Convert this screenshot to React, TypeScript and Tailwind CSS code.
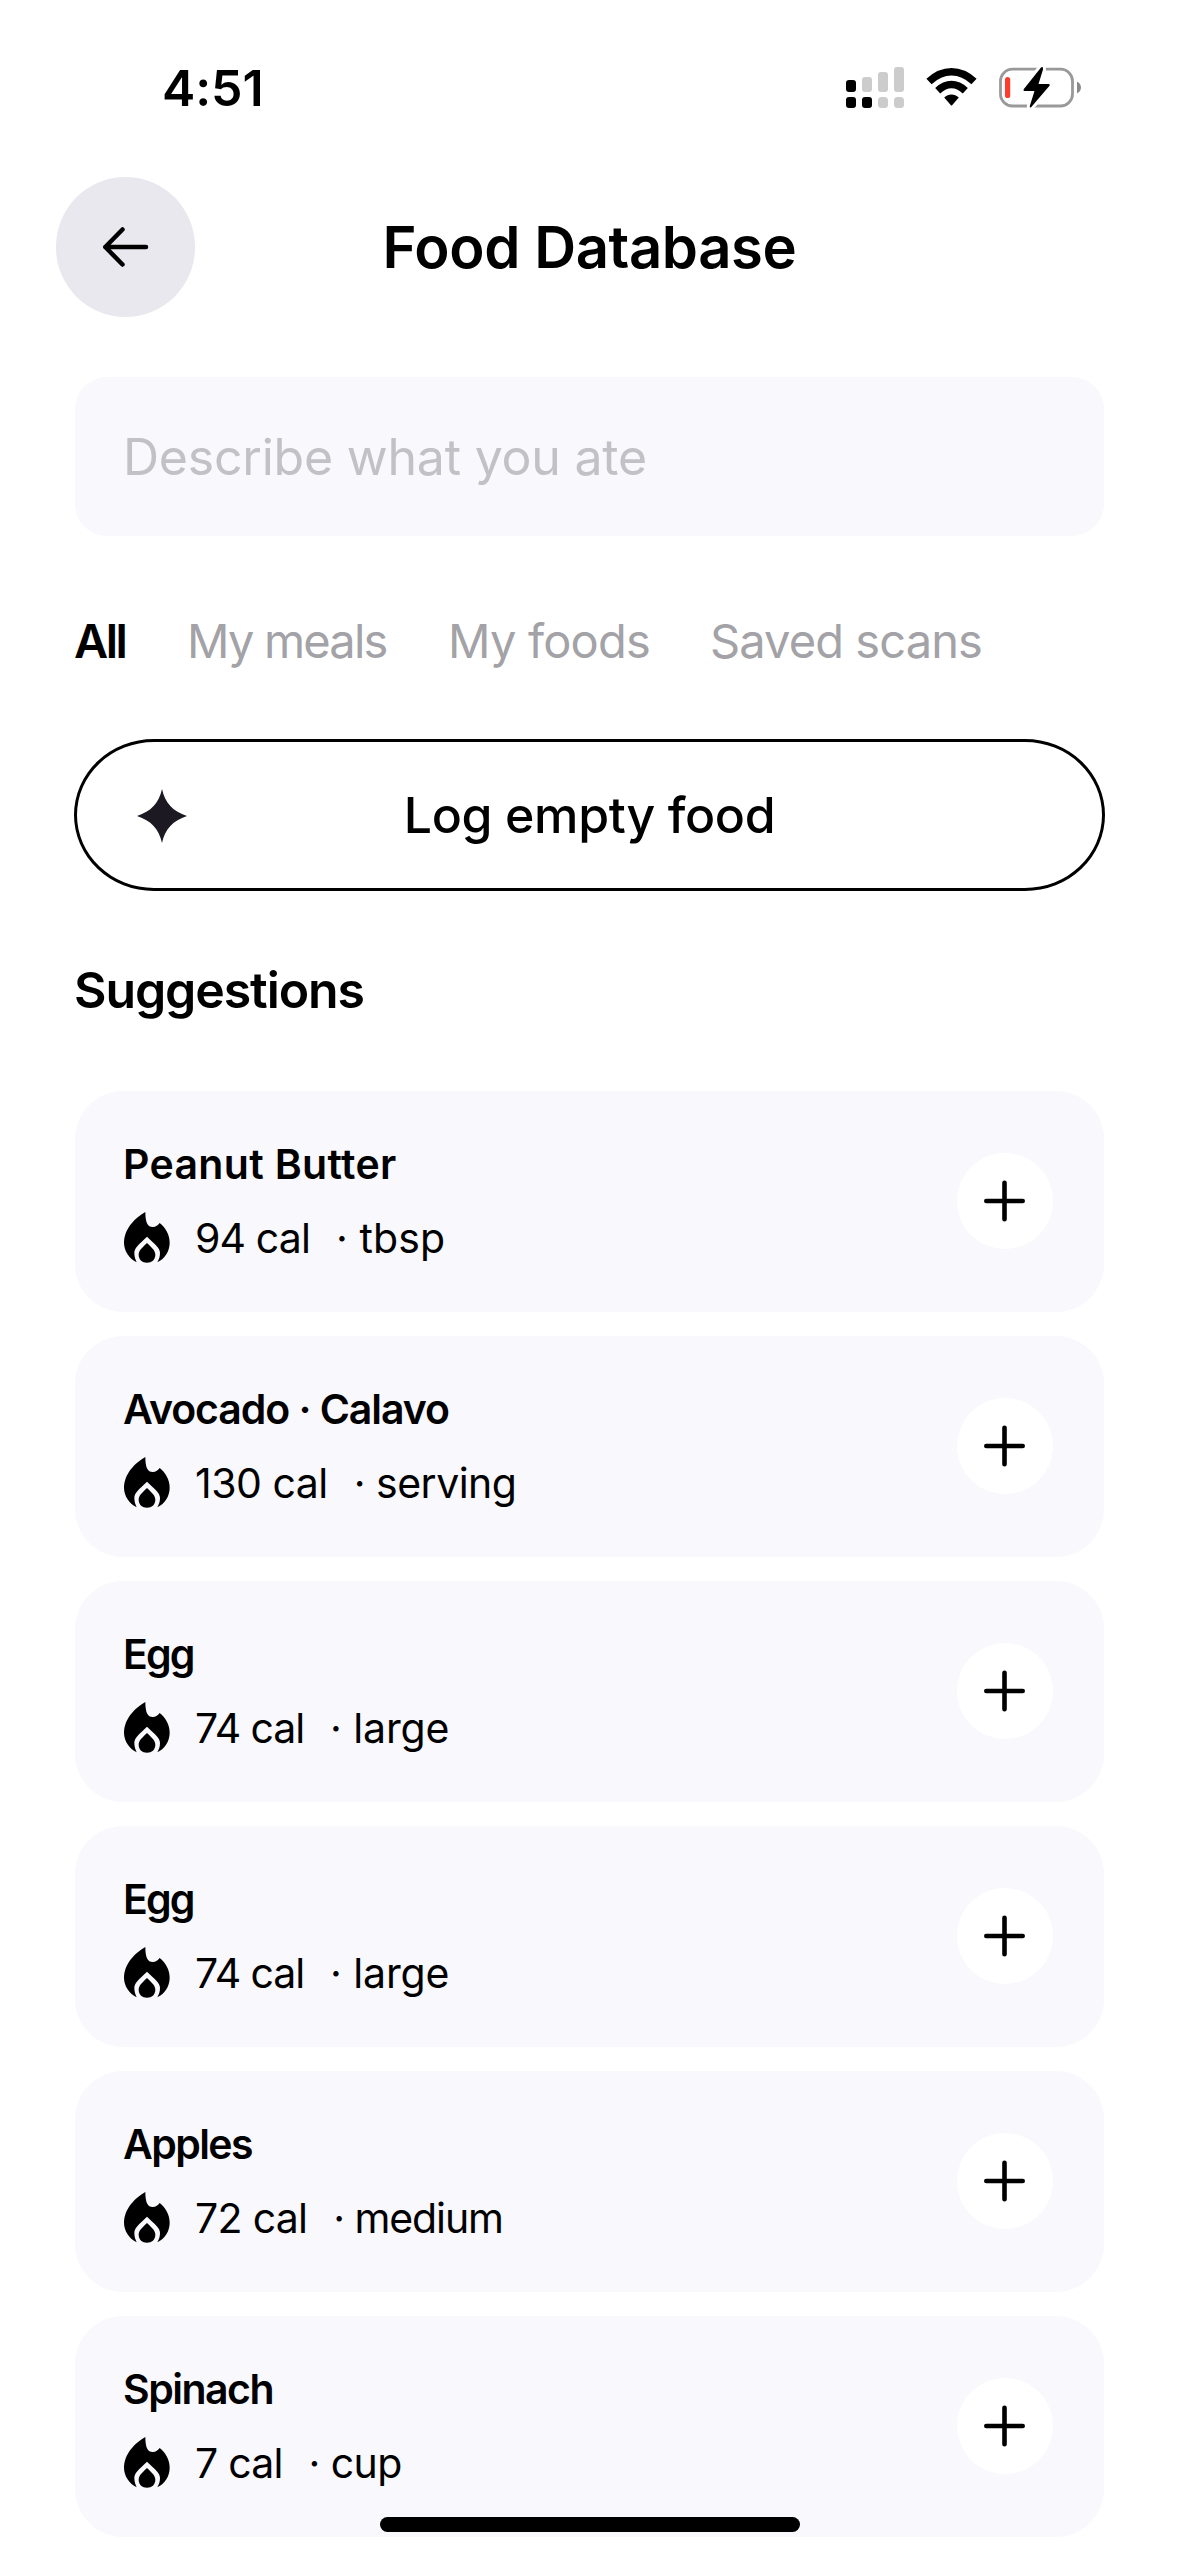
type Food = {
  name: string;
  nameClass: string;
  calories: string;
  caloriesClass: string;
  unit: string;
  unitClass: string;
};

const foods: Food[] = [
  { name: "Peanut Butter", nameClass: "tracking-[0.34px]", calories: "94 cal", caloriesClass: "tracking-[-0.86px]", unit: "tbsp", unitClass: "tracking-[0.1px]" },
  { name: "Avocado · Calavo", nameClass: "tracking-[-1.07px]", calories: "130 cal", caloriesClass: "tracking-[-0.5px]", unit: "serving", unitClass: "tracking-[-0.5px]" },
  { name: "Egg", nameClass: "tracking-[-1.8px]", calories: "74 cal", caloriesClass: "tracking-[-1.1px]", unit: "large", unitClass: "tracking-[-0.1px]" },
  { name: "Egg", nameClass: "tracking-[-1.8px]", calories: "74 cal", caloriesClass: "tracking-[-1.1px]", unit: "large", unitClass: "tracking-[-0.1px]" },
  { name: "Apples", nameClass: "tracking-[-1.6px]", calories: "72 cal", caloriesClass: "tracking-[-0.7px]", unit: "medium", unitClass: "tracking-[-1.1px]" },
  { name: "Spinach", nameClass: "tracking-[-1.5px]", calories: "7 cal", caloriesClass: "tracking-[-0.8px]", unit: "cup", unitClass: "tracking-[-0.6px]" },
];

function StatusIcons() {
  return (
    <svg width="250" height="56" viewBox="840 60 250 56" fill="none" aria-hidden="true">
      <g fill="#cccccc">
        <rect x="862" y="77" width="10" height="15" rx="3" />
        <rect x="878" y="72" width="10" height="20" rx="3" />
        <rect x="894" y="67" width="10" height="25" rx="3" />
        <rect x="878" y="97" width="10" height="11" rx="3.5" />
        <rect x="894" y="97" width="10" height="11" rx="3.5" />
      </g>
      <g fill="#000">
        <rect x="846" y="80" width="10" height="12" rx="3" />
        <rect x="846" y="97" width="10" height="11" rx="3" />
        <rect x="862" y="97" width="10" height="11" rx="3" />
      </g>
      <path d="M929 81.5C943 68.5 960 68.5 974 81.5" stroke="#000" strokeWidth="7.6" />
      <path d="M937.7 90.7C946.5 82.5 956.5 82.5 965.3 90.7" stroke="#000" strokeWidth="7.4" />
      <path d="M944.2 97.6C948.5 93.3 954.5 93.3 958.8 97.6L952.3 105Q951.5 106 950.7 105Z" fill="#000" />
      <rect x="1000.5" y="69.2" width="72" height="36.8" rx="12" stroke="#999" strokeWidth="2.8" />
      <path d="M1077 81.5C1082.3 84 1082.3 91 1077 93.5Z" fill="#8a8a8a" />
      <rect x="1005" y="77" width="5.2" height="21" rx="2.6" fill="#ff3b30" />
      <path
        d="M1041 67.5L1023.7 89.2Q1022.8 91 1024.5 91H1034.5L1029.8 106Q1029.6 108.5 1031.3 107L1049.3 86Q1050.6 84 1048.5 84H1038.5L1043 69.5Q1043.3 66 1041 67.5Z"
        fill="#000"
        stroke="#fff"
        strokeWidth="6"
        paintOrder="stroke"
        strokeLinejoin="round"
      />
    </svg>
  );
}

function FlameIcon() {
  return (
    <svg width="46" height="51" viewBox="72 38 138 153" fill="#000" aria-hidden="true">
      <path d="M136 38C104 56 72 90 72 130C72 155 88 178 110 189C106 180 103 172 103 161C103 146 116 136 141 112C166 136 180 146 180 161C180 172 177 180 172 189C195 178 209 155 209 130C209 105 196 85 179 71C174 78 168 83 158 83C143 83 136 70 136 38Z" />
      <path d="M141 131C125 147 116 154 116 166C116 181 127 190 141 190C155 190 166 181 166 166C166 154 157 147 141 131Z" />
    </svg>
  );
}

function FoodCard({ food }: { food: Food }) {
  return (
    <li className="flex h-[221px] items-center justify-between rounded-[48px] bg-[#f8f8fd] pl-[49px] pr-[51px]">
      <div className="flex flex-col pb-px text-[41px] leading-[50px]">
        <h3 className={`-ml-px font-semibold whitespace-nowrap ${food.nameClass}`}>{food.name}</h3>
        <div className="mt-[23px] flex items-center whitespace-nowrap">
          <FlameIcon />
          <span className={`ml-[25px] ${food.caloriesClass}`}>{food.calories}</span>
          <span className={`ml-[26px] ${food.unitClass}`}>· {food.unit}</span>
        </div>
      </div>
      <button type="button" aria-label={`Add ${food.name}`} className="-mt-px flex size-24 items-center justify-center rounded-full bg-white">
        <svg width="42" height="42" viewBox="0 0 42 42" fill="none" stroke="#000" strokeWidth="4.6" strokeLinecap="round" aria-hidden="true">
          <path d="M20.5 2.8V39.2M2.3 21H38.7" />
        </svg>
      </button>
    </li>
  );
}

export default function App() {
  return (
    <div className="relative flex h-[2556px] w-[1179px] flex-col overflow-hidden bg-white font-['Inter',sans-serif] text-black">
      <div className="flex h-[176px] shrink-0 items-center justify-between pr-[89px] pl-[162px]">
        <span className="text-[50px] leading-none font-semibold tracking-[-0.1px]">4:51</span>
        <StatusIcons />
      </div>

      <header className="mt-px grid h-[140px] shrink-0 grid-cols-[140px_1fr_140px] items-center px-[56px]">
        <button type="button" aria-label="Back" className="flex h-[140px] w-[139px] items-center justify-center rounded-full bg-[#e9e8ef]">
          <svg width="46" height="40" viewBox="0 0 46 40" fill="none" stroke="#000" strokeWidth="4.5" strokeLinecap="round" strokeLinejoin="round" aria-hidden="true">
            <path d="M43 20H2.3M19.5 2.5L2.3 20L19.5 37.5" />
          </svg>
        </button>
        <h1 className="text-center text-[58px] leading-none font-semibold tracking-[-0.4px]">Food Database</h1>
      </header>

      <main className="flex flex-col px-[75px]">
        <input
          type="text"
          placeholder="Describe what you ate"
          className="mt-[60px] h-[159px] w-full rounded-[32px] bg-[#f8f8fd] px-12 text-[50px] tracking-[-0.22px] placeholder:text-[#c2c1c6] placeholder:opacity-100"
        />

        <nav className="mt-[73px] -ml-px flex text-[47px] leading-[64px] whitespace-nowrap text-[#a3a2a7]">
          <span className="w-[113px] font-semibold tracking-[-2.5px] text-black">All</span>
          <span className="w-[261px] tracking-[-1.8px]">My meals</span>
          <span className="w-[262px] tracking-[-0.8px]">My foods</span>
          <span className="tracking-[-0.9px]">Saved scans</span>
        </nav>

        <button
          type="button"
          className="relative -mx-px mt-[66px] flex h-[152px] items-center justify-center rounded-[80px/76px] border-[3px] border-black"
        >
          <svg className="absolute top-[47px] left-[60px]" width="50" height="54" viewBox="0 0 50 54" fill="#1c1922" aria-hidden="true">
            <path d="M25 0C28 14 36 22.5 50 27C36 31.5 28 40 25 54C22 40 14 31.5 0 27C14 22.5 22 14 25 0Z" />
          </svg>
          <span className="text-[50px] leading-none font-medium tracking-[-0.36px]">Log empty food</span>
        </button>

        <h2 className="mt-[69px] -ml-px text-[50px] leading-[60px] font-semibold tracking-[-1.1px]">Suggestions</h2>

        <ul className="mt-[71px] flex flex-col gap-6">
          {foods.map((food, index) => (
            <FoodCard key={index} food={food} />
          ))}
        </ul>
      </main>

      <div className="absolute bottom-6 left-[380px] h-[15px] w-[420px] rounded-full bg-black" />
    </div>
  );
}
